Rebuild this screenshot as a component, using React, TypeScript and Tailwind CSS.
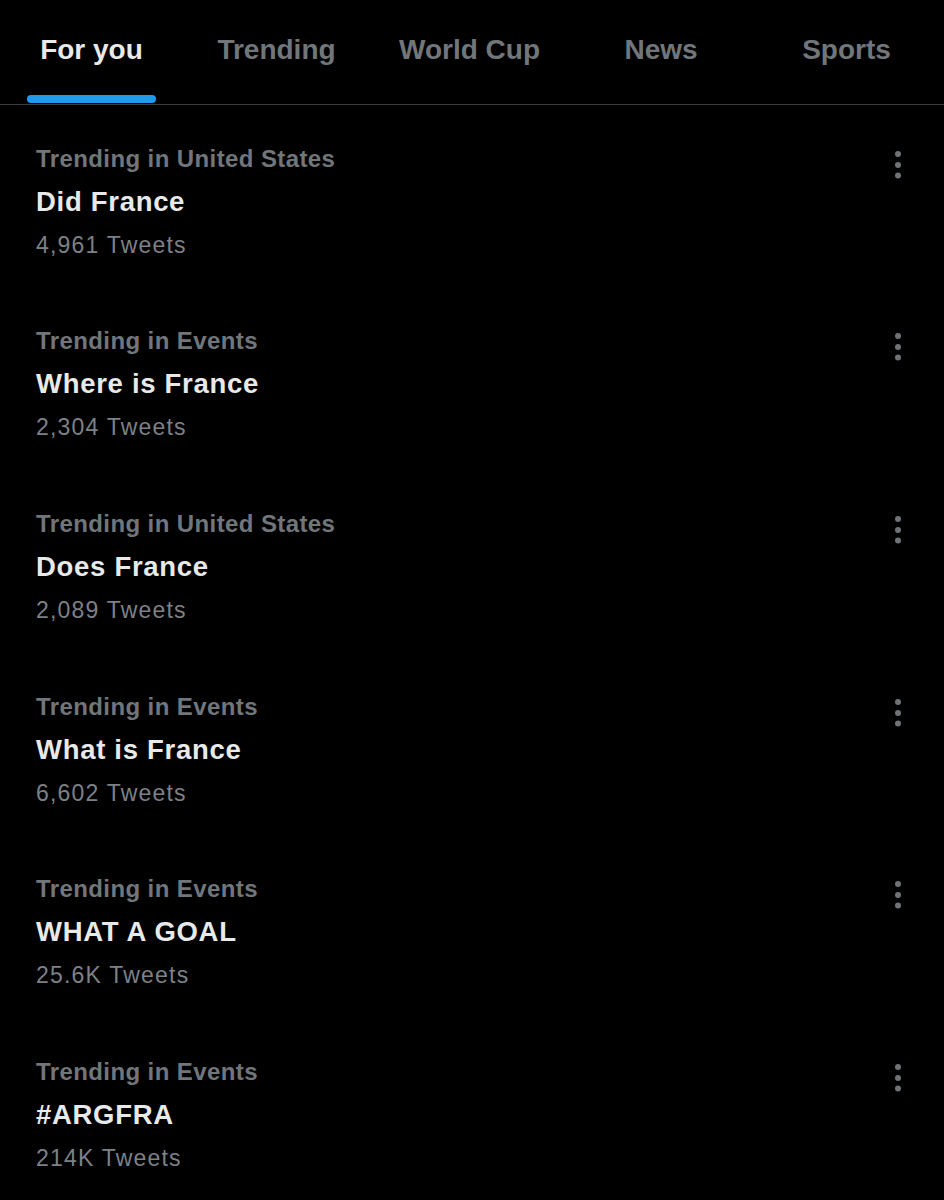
import React from "react";

type Trend = { category: string; title: string; count: string };

const trends: Trend[] = [
  { category: "Trending in United States", title: "Did France", count: "4,961 Tweets" },
  { category: "Trending in Events", title: "Where is France", count: "2,304 Tweets" },
  { category: "Trending in United States", title: "Does France", count: "2,089 Tweets" },
  { category: "Trending in Events", title: "What is France", count: "6,602 Tweets" },
  { category: "Trending in Events", title: "WHAT A GOAL", count: "25.6K Tweets" },
  { category: "Trending in Events", title: "#ARGFRA", count: "214K Tweets" },
];

const tabs = ["For you", "Trending", "World Cup", "News", "Sports"];

const MoreIcon = () => (
  <svg width="8" height="30" viewBox="0 0 8 30" className="mt-[12px] shrink-0">
    <circle cx="4" cy="4" r="3" fill="#6f7377" />
    <circle cx="4" cy="15" r="3" fill="#6f7377" />
    <circle cx="4" cy="25.5" r="3" fill="#6f7377" />
  </svg>
);

const TrendRow = ({ trend }: { trend: Trend }) => (
  <div className="flex h-[182.6px] items-start justify-between pl-[36px] pr-[42px] pt-[32.8px]">
    <div className="flex flex-col">
      <span className="text-[24px] leading-[42px] font-bold tracking-[0.4px] text-[#71767b]">
        {trend.category}
      </span>
      <span className="text-[27.5px] leading-[43px] font-bold tracking-[0.7px] text-[#e7e9ea]">
        {trend.title}
      </span>
      <span className="text-[23px] leading-[44px] tracking-[1.2px] text-[#7d8186]">
        {trend.count}
      </span>
    </div>
    <MoreIcon />
  </div>
);

export default function App() {
  return (
    <div className="min-h-[1200px] w-[944px] overflow-hidden bg-black font-['Liberation_Sans',Arial,sans-serif]">
      <nav className="grid grid-cols-[183px_187px_199px_184px_1fr] border-b border-[#3a3d40] pt-[36px] pb-[1px] pr-[4px]">
        {tabs.map((tab, i) => (
          <div key={tab} className="flex justify-center">
            <div className="flex flex-col items-stretch">
              <span
                className={`h-[28px] px-[13px] text-center text-[28px] leading-[28px] font-bold whitespace-nowrap ${
                  i === 0 ? "text-[#e7e9ea]" : "text-[#71767b]"
                }`}
              >
                {tab}
              </span>
              <div
                className={`mt-[31px] h-[8px] rounded-full ${
                  i === 0 ? "bg-[#1d9bf0]" : "bg-transparent"
                }`}
              />
            </div>
          </div>
        ))}
      </nav>
      <div className="flex flex-col">
        {trends.map((trend) => (
          <TrendRow key={trend.title} trend={trend} />
        ))}
      </div>
    </div>
  );
}
